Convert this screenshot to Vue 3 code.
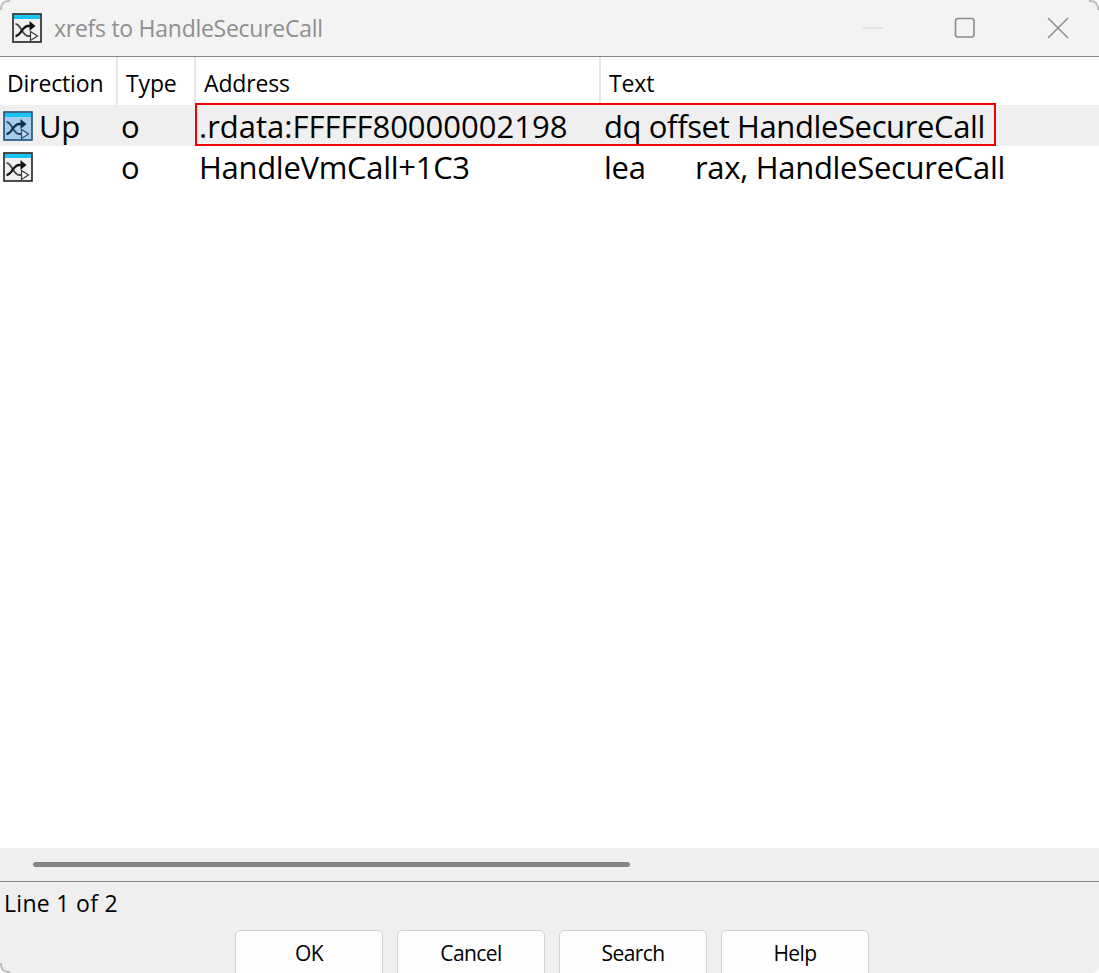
<script setup>
const columns = [
  { label: 'Direction', cls: 'c1' },
  { label: 'Type', cls: 'c2' },
  { label: 'Address', cls: 'c3' },
  { label: 'Text', cls: 'c4' },
]
const rows = [
  { dir: 'Up', type: 'o', addr: '.rdata:FFFFF80000002198', op: 'dq offset HandleSecureCall', selected: true },
  { dir: '', type: 'o', addr: 'HandleVmCall+1C3', op: 'lea', arg: 'rax, HandleSecureCall', selected: false },
]
const buttons = ['OK', 'Cancel', 'Search', 'Help']
</script>

<template>
  <div class="window">
    <header class="titlebar">
      <svg class="icon title-icon" viewBox="0 0 30 30">
        <rect x="1" y="1" width="28" height="28" fill="#f1f1f1" stroke="#222" stroke-width="1.6" />
        <rect x="2" y="2" width="26" height="4" fill="#17c5f5" />
        <path d="M3.500 11C9 11 10 23 16 23h3" fill="none" stroke="#4a4a4a" stroke-width="1.800" />
        <path d="M18.500 18.500l7 4.500-7 4.500z" fill="#f8f8f8" stroke="#3a3a3a" stroke-width="1.200" />
        <path d="M3.500 23C9 23 10 13 16 13h3" fill="none" stroke="#161616" stroke-width="2.300" />
        <path d="M17.500 8l6 5-6 5z" fill="#161616" />
      </svg>
      <span class="title">xrefs to HandleSecureCall</span>
      <div class="controls">
        <svg class="ctl" viewBox="0 0 22 22"><path d="M2 11h20" stroke="#dcdcdc" stroke-width="1.6" /></svg>
        <svg class="ctl" viewBox="0 0 22 22"><rect x="1.500" y="1.500" width="18.500" height="18.500" rx="2.500" fill="none" stroke="#8c8c8c" stroke-width="1.600" /></svg>
        <svg class="ctl" viewBox="0 0 22 22"><path d="M1 1l20 20M21 1L1 21" stroke="#8c8c8c" stroke-width="1.500" fill="none" /></svg>
      </div>
    </header>

    <section class="list">
      <div class="head">
        <div v-for="c in columns" :key="c.label" class="th" :class="c.cls">{{ c.label }}</div>
      </div>
      <div class="rows">
        <div v-for="(r, i) in rows" :key="i" class="row" :class="{ selected: r.selected }">
          <div class="td c1">
            <svg class="icon row-icon" viewBox="0 0 30 30">
              <rect x="1" y="1" width="28" height="28" :fill="r.selected ? '#a6cdec' : '#f1f1f1'" :stroke="r.selected ? '#1f4e79' : '#222'" stroke-width="1.600" />
              <rect x="2" y="2" width="26" height="4" fill="#17c5f5" />
              <path d="M3.500 11C9 11 10 23 16 23h3" fill="none" :stroke="r.selected ? '#2a4a68' : '#4a4a4a'" stroke-width="1.800" />
              <path d="M18.500 18.500l7 4.500-7 4.500z" :fill="r.selected ? '#c3dcf2' : '#f8f8f8'" :stroke="r.selected ? '#2a4a68' : '#3a3a3a'" stroke-width="1.200" />
              <path d="M3.500 23C9 23 10 13 16 13h3" fill="none" :stroke="r.selected ? '#12304d' : '#161616'" stroke-width="2.300" />
              <path d="M17.500 8l6 5-6 5z" :fill="r.selected ? '#12304d' : '#161616'" />
            </svg>
            <span class="dir">{{ r.dir }}</span>
          </div>
          <div class="td c2">{{ r.type }}</div>
          <div class="td c3">{{ r.addr }}</div>
          <div class="td c4"><span :class="{ op: r.arg }">{{ r.op }}</span><span v-if="r.arg">{{ r.arg }}</span></div>
        </div>
        <div class="highlight"></div>
      </div>
    </section>

    <div class="scrollbar"><div class="thumb"></div></div>

    <footer class="footer">
      <div class="status">Line 1 of 2</div>
      <div class="buttons">
        <button v-for="b in buttons" :key="b" class="btn">{{ b }}</button>
      </div>
    </footer>

    <i class="corner tl"></i>
    <i class="corner tr"></i>
    <i class="corner bl"></i>
  </div>
</template>

<style>
html, body { margin: 0; background: #fff; overflow: hidden; }
</style>

<style scoped>
.window {
  position: relative;
  width: 1099px;
  height: 973px;
  display: flex;
  flex-direction: column;
  background: #f0f0f0;
  overflow: hidden;
  font-family: "Open Sans", "Noto Sans", sans-serif;
  color: #000;
  border-radius: 8px;
}
.corner {
  position: absolute;
  width: 8px;
  height: 8px;
  border: 0 solid #bdbdbd;
}
.corner.tl { left: 0; top: 0; border-width: 2px 0 0 2px; border-top-left-radius: 8px; }
.corner.tr { right: 0; top: 0; border-width: 2px 2px 0 0; border-top-right-radius: 8px; }
.corner.bl { left: 0; bottom: 0; border-width: 0 0 2px 2px; border-bottom-left-radius: 8px; }
.titlebar {
  height: 56px;
  flex: none;
  display: flex;
  align-items: center;
  padding-left: 12px;
  background: #f3f3f3;
  border-bottom: 1px solid #858585;
  box-sizing: content-box;
}
.icon { width: 30px; height: 30px; flex: none; display: block; }
.title { margin-left: 12px; font-size: 23px; color: #8f8f8f; letter-spacing: -0.27px; white-space: nowrap; }
.controls { margin-left: auto; display: flex; align-items: center; gap: 71px; padding-right: 30px; margin-top: -1px; }
.ctl { width: 22px; height: 22px; display: block; }
.list { flex: 1; background: #fff; display: flex; flex-direction: column; min-height: 0; }
.head { display: flex; height: 48px; flex: none; }
.th {
  font-size: 23px;
  letter-spacing: -0.15px;
  line-height: 52px;
  padding-left: 8px;
  box-sizing: border-box;
  border-right: 2px solid #e6e6e6;
  height: 48px;
  white-space: nowrap;
}
.th.c1 { padding-left: 7px; }
.c1 { width: 118px; flex: none; }
.c2 { width: 78px; flex: none; }
.c3 { width: 405px; flex: none; }
.c4 { flex: 1; border-right: 0; }
.rows { position: relative; }
.row { display: flex; height: 41px; align-items: center; }
.row.selected { background: #efefef; }
.td {
  font-size: 31px;
  letter-spacing: -0.3px;
  line-height: 41px;
  padding-left: 3px;
  box-sizing: border-box;
  white-space: nowrap;
  display: flex;
  align-items: center;
}
.dir, .td.c2, .td.c3, .td.c4 { padding-top: 2px; }
.dir { margin-left: 6px; line-height: 39px; }
.td.c2, .td.c3, .td.c4 { line-height: 39px; }
.row.selected .td.c3 { letter-spacing: 0; }
.row.selected .td.c4 { letter-spacing: -0.38px; }
.op { display: inline-block; width: 91px; }
.highlight {
  position: absolute;
  left: 195px;
  top: -2px;
  width: 801px;
  height: 43px;
  box-sizing: border-box;
  border: 2px solid #f00000;
  pointer-events: none;
}
.scrollbar {
  height: 33px;
  flex: none;
  display: flex;
  align-items: center;
  padding-left: 33px;
  background: #efefef;
  border-bottom: 1px solid #85858f;
  box-sizing: content-box;
}
.thumb { width: 597px; height: 5px; border-radius: 3px; background: #858585; }
.footer { height: 91px; flex: none; background: #efefef; display: flex; flex-direction: column; overflow: hidden; }
.status { flex: none; font-size: 23px; letter-spacing: 0.3px; line-height: 30px; padding: 6px 0 0 4px; height: 48px; box-sizing: border-box; }
.buttons { flex: none; display: flex; gap: 14px; padding-left: 235px; }
.btn {
  width: 148px;
  height: 48px;
  flex: none;
  box-sizing: border-box;
  border: 1.5px solid #d0d0d0;
  border-radius: 5px;
  background: #fdfdfd;
  font-family: inherit;
  font-size: 21px;
  letter-spacing: -0.6px;
  color: #000;
  padding: 0 0 2px;
}
</style>
